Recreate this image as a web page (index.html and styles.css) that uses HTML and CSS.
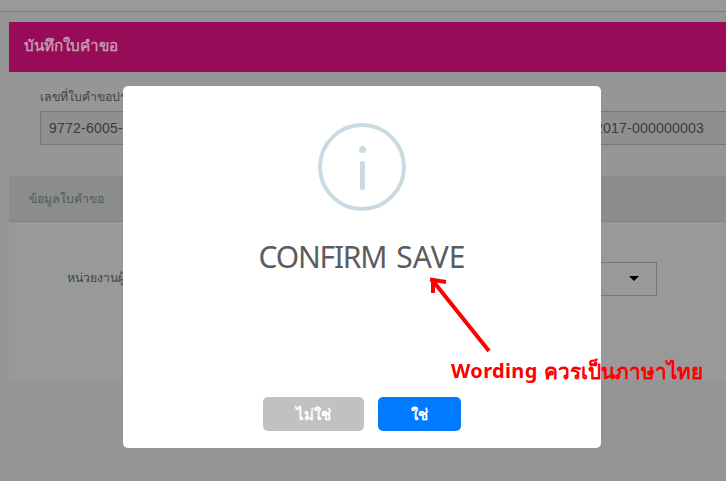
FILE: index.html
```html
<!DOCTYPE html>
<html lang="th">
<head>
<meta charset="utf-8">
<title>บันทึกใบคำขอ</title>
<link rel="stylesheet" href="styles.css">
</head>
<body>
<div class="topbar"></div>
<main class="panel">
  <h1 class="panel-title"><span>บันทึกใบคำขอ</span></h1>
  <section class="summary">
    <label class="summary-label">เลขที่ใบคำขอประกัน</label>
    <div class="readonly"><span>9772-6005-</span><span>2017-000000003</span></div>
  </section>
  <h2 class="section-title"><span>ข้อมูลใบคำขอ</span></h2>
  <section class="details">
    <label class="unit-label">หน่วยงานผู้</label>
    <div class="select"><span class="caret"></span></div>
  </section>
</main>
<div class="modal" role="dialog">
  <svg class="info" width="88" height="88" viewBox="0 0 88 88">
    <circle cx="44" cy="44" r="42" fill="none" stroke="#c9dae1" stroke-width="4"/>
    <circle cx="44.5" cy="26.5" r="3.5" fill="#c9dae1"/>
    <rect x="42" y="38" width="5" height="29" rx="2" fill="#c9dae1"/>
  </svg>
  <h3 class="message"><span class="word-first">CONFIRM</span> <span>SAVE</span></h3>
  <div class="actions">
    <button class="btn btn-no"><span>ไม่ใช่</span></button>
    <button class="btn btn-yes"><span>ใช่</span></button>
  </div>
</div>
<svg class="arrow" width="64" height="78" viewBox="0 0 64 78">
  <path d="M60 74 L4 4 M4 16 V3 M1 2.5 L17 5" fill="none" stroke="#f00" stroke-width="4"/>
</svg>
<div class="note"><span class="note-en">Wording</span><span class="note-th">ควรเป็นภาษาไทย</span></div>
</body>
</html>
```
FILE: styles.css
```css
* { box-sizing: border-box; }
body {
  margin: 0;
  width: 726px;
  height: 481px;
  overflow: hidden;
  background: #959595;
  font-family: "Liberation Sans", "Noto Sans", sans-serif;
  color: #444;
}
h1, h2, h3 { margin: 0; font-weight: normal; }
span { white-space: nowrap; }
.topbar { height: 12px; background: #999; border-bottom: 1px solid #7c7c7c; }
.panel { margin: 10px 0 0 9px; height: 358px; background: #999; }
.panel-title {
  height: 50px;
  padding-left: 15px;
  background: #980b58;
  color: #c5a0b3;
  font-size: 15.3px;
  -webkit-text-stroke: 0.4px #c5a0b3;
  line-height: 48px;
}
.summary { height: 104px; padding: 15px 0 0 30px; background: #969696; border-left: 1px solid #999; }
.summary-label, .unit-label { color: #444; font-size: 12.3px; white-space: nowrap; }
.summary-label { display: block; height: 24px; line-height: 20px; }
.readonly {
  display: flex;
  justify-content: space-between;
  height: 34px;
  padding: 0 22px 0 8px;
  border: 1px solid #777;
  border-right: 0;
  background: #8f8f8f;
  color: #3b3b3b;
  font-size: 14px;
  letter-spacing: 0.22px;
  line-height: 33px;
}
.section-title {
  height: 46px;
  padding-left: 20px;
  background: #8a8d8b;
  border-bottom: 1px solid #7e8180;
  color: #555b5d;
  font-size: 12.4px;
  line-height: 47px;
}
.details { display: flex; padding: 40px 69px 0 58px; justify-content: space-between; }
.unit-label { line-height: 32px; }
.select { display: flex; justify-content: flex-end; align-items: center; width: 300px; height: 34px; padding-right: 17px; border: 1px solid #777; }
.caret { width: 0; height: 0; margin-top: -2px; border: 5px solid transparent; border-top-color: #000; border-bottom: 0; }
.modal {
  position: absolute;
  left: 123px;
  top: 86px;
  width: 478px;
  height: 362px;
  padding-top: 37px;
  display: flex;
  flex-direction: column;
  align-items: center;
  background: #fff;
  border-radius: 5px;
}
.message { display: flex; gap: 10px; margin-top: 26px; height: 40px; color: #5b5c60; font-family: "Noto Sans", sans-serif; font-size: 30px; line-height: 40px; }
.word-first { letter-spacing: -1.2px; }
.actions { display: flex; gap: 14px; margin-top: 120px; }
.btn { height: 34px; padding: 0; border: 0; border-radius: 5px; color: #fff; font: bold 15px/34px "Noto Sans", sans-serif; }
.btn-no { width: 101px; background: #c1c1c1; }
.btn-yes { width: 83px; background: #007aff; }
.arrow { position: absolute; left: 429px; top: 277px; }
.note { position: absolute; left: 451px; top: 356px; display: flex; gap: 6px; color: #f00; font: bold 20px/30px "Noto Sans", sans-serif; }
.note-en { letter-spacing: 0.35px; }
.note-th { font-size: 20.8px; }
```
